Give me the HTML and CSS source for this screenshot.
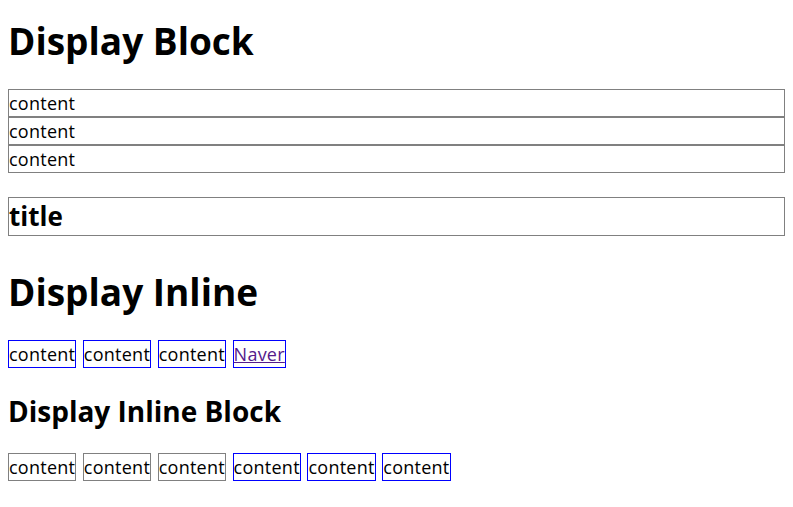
FILE: index.html
```html
<!DOCTYPE html>
<html lang="ko">
<head>
<meta charset="utf-8">
<title>Display</title>
<link rel="stylesheet" href="styles.css">
</head>
<body>
<h1 class="first">Display Block</h1>
<div class="block">content</div>
<div class="block">content</div>
<div class="block">content</div>
<h2 class="title">title</h2>
<h1 class="second">Display Inline</h1>
<div class="row">
<span class="inline">content</span>
<span class="inline">content</span>
<span class="inline">content</span>
<a class="inline" href="#">Naver</a>
</div>
<h2 class="sub">Display Inline Block</h2>
<div class="row">
<span class="ib gray">content</span>
<span class="ib gray">content</span>
<span class="ib gray">content</span>
<span class="ib blue">content</span>
<span class="ib blue">content</span>
<span class="ib blue">content</span>
</div>
</body>
</html>
```
FILE: styles.css
```css
body {
  margin: 8px;
  font-family: "Open Sans", "Noto Sans CJK KR", sans-serif;
  font-size: 18px;
  letter-spacing: 0.25px;
  word-spacing: 1.7px;
  color: #000;
}
h1 {
  font-size: 37px;
  font-weight: bold;
  line-height: 46px;
  letter-spacing: 0;
  word-spacing: 0;
}
.first {
  margin: 10px 0 25px;
}
.block {
  border: 1px solid #808080;
  line-height: 26px;
}
.title {
  border: 1px solid #808080;
  font-size: 26px;
  line-height: 37px;
  letter-spacing: 0;
  margin: 24px 0 0;
}
.second {
  margin: 33px 0 26px;
}
.row {
  line-height: 26px;
}
.inline {
  border: 1px solid #0000ff;
  padding: 1px 0;
}
a.inline {
  color: #551a8b;
}
.sub {
  font-size: 28px;
  line-height: 34px;
  letter-spacing: 0;
  word-spacing: 0;
  margin: 27px 0 25px;
}
.ib {
  display: inline-block;
  line-height: 26px;
}
.gray {
  border: 1px solid #808080;
}
.blue {
  border: 1px solid #0000ff;
}
```
